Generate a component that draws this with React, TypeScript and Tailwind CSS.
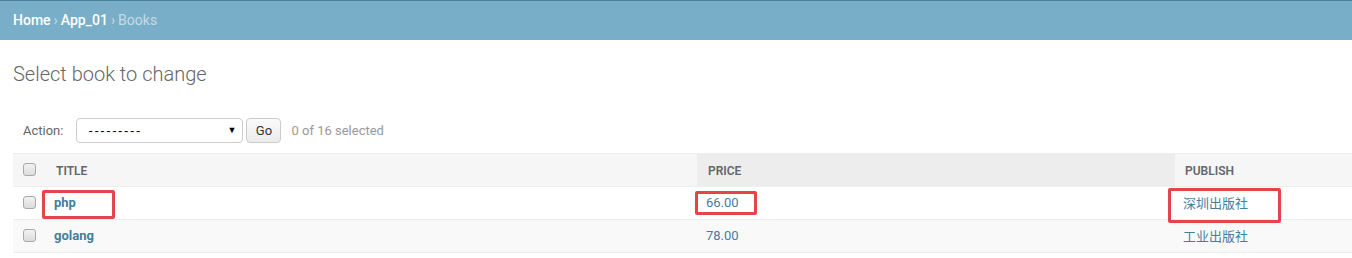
import React from "react";

const font = { fontFamily: 'Roboto, "Lucida Grande", Verdana, Arial, "Noto Sans CJK SC", sans-serif' };

function Box() {
  return (
    <div className="w-[13px] h-[13px] rounded-[3px] border border-[#a9a9a9] bg-gradient-to-b from-[#f2f2f2] to-[#dcdcdc]" />
  );
}

function RedBox({ className }: { className: string }) {
  return <div className={"absolute border-[3px] border-[#e6444b] rounded-[2px] pointer-events-none " + className} />;
}

export default function App() {
  const rows = [
    { title: "php", price: "66.00", pub: "深圳出版社", bg: "bg-white", mark: true },
    { title: "golang", price: "78.00", pub: "工业出版社", bg: "bg-[#f9f9f9]", mark: false },
  ];
  return (
    <div className="w-[1352px] h-[258px] bg-white overflow-hidden text-[13px]" style={font}>
      <div className="h-[1px] bg-[#4f8099]" />
      <div className="h-[39px] bg-[#79aec8] flex items-center pl-[13px] text-[14px] text-[#c4dce8]">
        <span className="text-white font-medium">Home</span>
        <span className="mx-[3px]">›</span>
        <span className="text-white font-medium">App_01</span>
        <span className="mx-[3px]">›</span>
        <span>Books</span>
      </div>
      <h1 className="mt-[22px] ml-[13px] text-[20px] font-light text-[#666] leading-[24px]">Select book to change</h1>
      <div className="mt-[32px] ml-[23px] flex items-center h-[25px]">
        <span className="text-[#666] text-[13px] mr-[13px]">Action:</span>
        <div className="w-[167px] h-[25px] border border-[#ccc] rounded-[4px] flex items-center justify-between pl-[11px] pr-[6px] bg-white">
          <span className="text-[13px] text-black tracking-[1.6px]" style={{ fontFamily: '"Liberation Sans", Arial, sans-serif' }}>---------</span>
          <span className="text-[9px] text-black">▼</span>
        </div>
        <div className="ml-[3px] w-[35px] h-[25px] border border-[#ccc] rounded-[4px] bg-gradient-to-b from-[#fafafa] to-[#ececec] flex items-center justify-center text-[13px] text-[#333]">
          Go
        </div>
        <span className="ml-[10px] text-[#999] text-[13px]">0 of 16 selected</span>
      </div>
      <div className="mt-[10px] ml-[13px] w-[1339px]">
        <div className="flex h-[34px] border-t border-b border-[#eee] bg-[#f6f6f6] text-[12px] text-[#666] font-semibold uppercase">
          <div className="w-[33px] flex items-center justify-end pr-[10px] pb-[2px]"><Box /></div>
          <div className="w-[651px] flex items-center pl-[10px] pt-[1px]">Title</div>
          <div className="w-[478px] flex items-center pl-[11px] pt-[1px] bg-[#ededed]">Price</div>
          <div className="flex-1 flex items-center pl-[10px] pt-[1px]">Publish</div>
        </div>
        {rows.map((r) => (
          <div key={r.title} className={"flex h-[33px] border-b border-[#eee] " + r.bg}>
            <div className="w-[33px] flex items-center justify-end pr-[10px] pb-[2px]"><Box /></div>
            <div className="w-[651px] flex items-center pl-[8px] relative">
              <span className="font-bold text-[#447e9b]">{r.title}</span>
              {r.mark && <RedBox className="left-[-4px] top-[3px] w-[73px] h-[29px]" />}
            </div>
            <div className="w-[478px] flex items-center pl-[9px] relative">
              <span className="text-[#447e9b]">{r.price}</span>
              {r.mark && <RedBox className="left-[-2px] top-[4px] w-[62px] h-[24px]" />}
            </div>
            <div className="flex-1 flex items-center pl-[8px] relative">
              <span className="text-[#447e9b]" style={{ fontFamily: '"Noto Sans CJK SC", sans-serif' }}>{r.pub}</span>
              {r.mark && <RedBox className="left-[-7px] top-[1px] w-[113px] h-[35px]" />}
            </div>
          </div>
        ))}
      </div>
    </div>
  );
}
